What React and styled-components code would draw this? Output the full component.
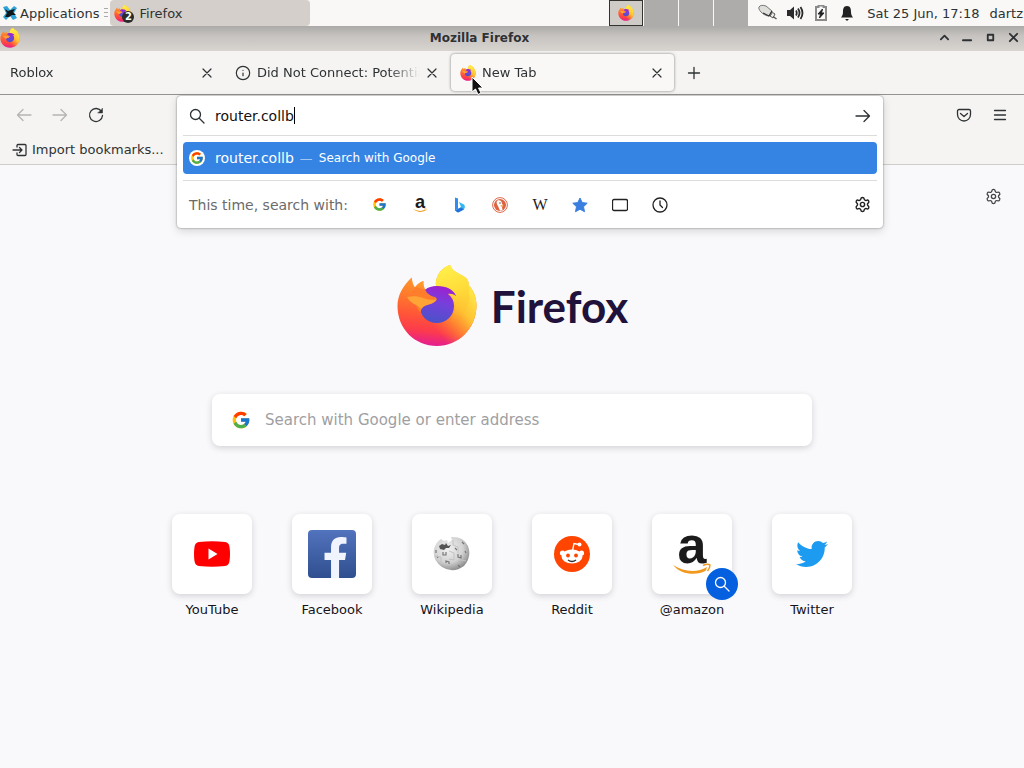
import React, { useId } from 'react'
import styled, { createGlobalStyle, css } from 'styled-components'
import { FcGoogle } from 'react-icons/fc'
import { FaFacebookF, FaTwitter } from 'react-icons/fa'
import { Info, Settings } from 'lucide-react'

const FirefoxLogo = ({ size }) => {
    const id = useId()
    const outline =
        'M14.700 12.500C15 16 16 20 18 22.500C20 19.500 23 17 26.500 16C26 19 27 22 28 24.500L39 21C38 13 43 3 53 0C54.500 4 57 6 60.500 8C64 10 67.500 11.500 70 14C71.500 16 71.500 18 71.500 20C76.500 25 79.500 32 79.500 41C79 64 61 81 40 81C18 81 0.500 64 0.500 41C0.500 31 5 22 14.700 12.500Z'
    return (
        <svg width={size} height={size} viewBox="0 0 80 82" aria-hidden="true">
            <defs>
                <linearGradient id={`${id}body`} x1="0.5" y1="0.1" x2="0.4" y2="1">
                    <stop offset="0" stopColor="#ffa52e" />
                    <stop offset="0.3" stopColor="#ff7f2b" />
                    <stop offset="0.6" stopColor="#ff5538" />
                    <stop offset="0.8" stopColor="#fc3b4c" />
                    <stop offset="1" stopColor="#e31c94" />
                </linearGradient>
                <linearGradient id={`${id}glow`} x1="0.98" y1="0.25" x2="0.42" y2="0.72">
                    <stop offset="0" stopColor="#fff04a" />
                    <stop offset="0.45" stopColor="#ffc233" />
                    <stop offset="0.7" stopColor="#ff9a2b" stopOpacity="0.7" />
                    <stop offset="1" stopColor="#ff7a2b" stopOpacity="0" />
                </linearGradient>
                <linearGradient id={`${id}flame`} x1="0.35" y1="0" x2="0.55" y2="1">
                    <stop offset="0" stopColor="#fff04a" />
                    <stop offset="0.5" stopColor="#ffdb38" />
                    <stop offset="1" stopColor="#ffb42b" stopOpacity="0" />
                </linearGradient>
                <linearGradient id={`${id}globe`} x1="0.65" y1="0" x2="0.4" y2="1">
                    <stop offset="0" stopColor="#a01fd0" />
                    <stop offset="0.45" stopColor="#7540dc" />
                    <stop offset="1" stopColor="#4a52c8" />
                </linearGradient>
            </defs>
            <path d={outline} fill={`url(#${id}body)`} />
            <path d={outline} fill={`url(#${id}glow)`} />
            <path
                d="M53 0C43 3 38 13 39 21C49 22 57 30 58 40C58 48 56 53 52 57C63 58 75 46 71.500 20C71.500 18 71.500 16 70 14C67.500 11.500 64 10 60.500 8C57 6 54.500 4 53 0Z"
                fill={`url(#${id}flame)`}
            />
            <path
                d="M28 25C31 22 35 21 40 21C50 21 57 25 59 31C56.500 29 53.500 28.500 51 29C55 32 57 36 57 41C57 51 49 58 40 58C30 58 23 51 23 41C23 35 25 29 28 25Z"
                fill={`url(#${id}globe)`}
            />
            <path
                d="M18 22L28 24.500C29 27 32 31 38 32C40 33 40 34.500 39 36C36 38.500 33 39 30 40C26 41.500 24 43.500 23.500 48C20 44 18 38 14 33Z"
                fill="#ff7d2b"
            />
            <path
                d="M10 32C15 31 21 31 26 33C31 35 36 35 39.500 34.500C37 38.500 33 39 30 40C27 41 25 42 24 44C21 39 14 40 10 32Z"
                fill="#ffa436"
            />
        </svg>
    )
}

const XfceIcon = () => (
    <svg width="16" height="16" viewBox="0 0 16 16" aria-hidden="true">
        <path d="M1 2L5 1L8 5L12 1L15 3L12 8L15 13L11 15L8 11L4 15L1 12L4 8Z" fill="#2fa3d6" />
        <path d="M3 4L6 6L9 5L13 4L11 7L14 10L10 10L7 12L3 12L5 8Z" fill="#10181c" />
    </svg>
)

const MouseIcon = () => (
    <svg width="20" height="18" viewBox="0 0 20 18" aria-hidden="true">
        <path d="M1 3C2 1 5 1 8 2L14 7L11 12C8 12 5 10 3 8C1 6 0.500 4 1 3Z" fill="#dededb" stroke="#777" />
        <path d="M5 9L11 12L14 7" fill="none" stroke="#333" strokeWidth="1.300" />
        <path d="M12 12L14.500 8.500L17 10L15 14Z" fill="#eee" stroke="#555" />
        <path d="M15 12.500L18.500 15" stroke="#555" strokeWidth="1.500" />
    </svg>
)

const VolumeIcon = () => (
    <svg width="18" height="16" viewBox="0 0 18 16" aria-hidden="true">
        <path d="M1 5H4L8 1.500V14.500L4 11H1Z" fill="#2b2b2b" />
        <path
            d="M10 5.500Q11.500 8 10 10.500M12 3.500Q15 8 12 12.500M14.500 2Q18.500 8 14.500 14"
            fill="none"
            stroke="#2b2b2b"
            strokeWidth="1.800"
        />
    </svg>
)

const BatteryIcon = () => (
    <svg width="18" height="16" viewBox="0 0 18 16" aria-hidden="true">
        <path d="M6.500 2V0.500H11.500V2H14V15H4V2Z" fill="none" stroke="#8a8a8a" strokeWidth="2" />
        <path d="M10.500 4L6 9H8.500L7.500 13L12 8H9.500Z" fill="#222" stroke="#222" />
    </svg>
)

const BellIcon = () => (
    <svg width="18" height="16" viewBox="0 0 18 16" aria-hidden="true">
        <path d="M9 1C5.500 1 5 4 5 7C5 10 4 11 3 12.500H15C14 11 13 10 13 7C13 4 12.500 1 9 1Z" fill="#222" />
        <path d="M7 14H11L9 16Z" fill="#222" />
    </svg>
)

const glyphs = {
    up: <path d="M2 8L6 4L10 8" strokeWidth="2" />,
    minimize: <path d="M1 9H10" strokeWidth="2" />,
    maximize: <path d="M3 3H9V9H3Z" strokeWidth="2" />,
    quit: <path d="M2 2L10 10M10 2L2 10" strokeWidth="2" />,
    close: <path d="M2 2L10 10M10 2L2 10" strokeWidth="1.200" />,
    plus: <path d="M8 2.500V13.500M2.500 8H13.500" />,
    back: <path d="M15 8H1.500M7 2.500L1.500 8L7 13.500" />,
    forward: <path d="M1 8H14.500M9 2.500L14.500 8L9 13.500" />,
    reload: (
        <>
            <path d="M13.500 4.500A6.500 6.500 0 1 0 14.500 8.500" />
            <path d="M14.500 1.500V6H10Z" fill="currentColor" strokeWidth="0.500" />
        </>
    ),
    search: (
        <>
            <circle cx="6.500" cy="6.500" r="5" />
            <path d="M10.500 10.500L15 15" />
        </>
    ),
    pocket: (
        <>
            <path d="M3 2.500H13A1.500 1.500 0 0 1 14.500 4V7.500A6.500 6.500 0 0 1 1.500 7.500V4A1.500 1.500 0 0 1 3 2.500Z" />
            <path d="M4.500 6.500L8 9.500L11.500 6.500" />
        </>
    ),
    menu: <path d="M2.500 3.500H13.500M2.500 8H13.500M2.500 12.500H13.500" />,
    import: <path d="M5 5V3.500A1 1 0 0 1 6 2.500H13A1 1 0 0 1 14 3.500V12.500A1 1 0 0 1 13 13.500H6A1 1 0 0 1 5 12.500V11M1 8H10M7.500 5.500L10 8L7.500 10.500" />,
    window: <rect x="0.500" y="2.500" width="15" height="11" rx="1.500" />,
    clock: (
        <>
            <circle cx="8" cy="8" r="7" />
            <path d="M8 4V8L10.500 10.500" />
        </>
    ),
}

const Glyph = ({ name, size = 16, box = 16, color = 'currentColor' }) => (
    <svg
        width={size}
        height={size}
        viewBox={`0 0 ${box} ${box}`}
        fill="none"
        stroke={color}
        strokeWidth="1.300"
        strokeLinecap="round"
        strokeLinejoin="round"
        aria-hidden="true"
    >
        {glyphs[name]}
    </svg>
)

const AmazonIcon = ({ size }) => (
    <svg width={size} height={size} viewBox="0 0 40 40" overflow="visible" aria-hidden="true">
        <text
            x="20"
            y="29"
            textAnchor="middle"
            fontFamily="Liberation Sans, sans-serif"
            fontWeight="700"
            fontSize="52"
            fill="#1b1b1b"
        >
            a
        </text>
        <path d="M1 31C12 38 25 39 35 33L34 36.500C25 42 9 41 1 31Z" fill="#f29a1f" />
        <path d="M31 31.500Q36 29.500 38 31Q38 34 35.500 37" fill="none" stroke="#f29a1f" strokeWidth="1.500" />
    </svg>
)

const BingIcon = () => (
    <svg width="16" height="16" viewBox="0 0 16 16" aria-hidden="true">
        <path d="M3 0.500L6 1.500V12L3 13.500Z" fill="#2f8df0" />
        <path d="M7 5L12 7.500C13.500 9 13 12 11 13L6 15.500L3 13.500L9 10Z" fill="#35b8f2" />
        <path d="M3 13.500L9 10.500L12 12.500L6 15.500Z" fill="#2470d8" />
    </svg>
)

const DuckIcon = () => (
    <svg width="16" height="16" viewBox="0 0 16 16" aria-hidden="true">
        <circle cx="8" cy="8" r="7.400" fill="#fff" stroke="#e0674a" />
        <circle cx="8" cy="8" r="6" fill="#e0613f" />
        <path d="M5.500 3.500C8 2.500 10 4 10 7L11 8L10 10L10.500 13L8 13.800L6 9C4.500 7 4 4.500 5.500 3.500Z" fill="#fff" />
        <circle cx="8" cy="6" r="0.700" fill="#333" />
        <path d="M8.500 8L12 8.500L9 10Z" fill="#fbb03b" />
    </svg>
)

const StarIcon = () => (
    <svg width="16" height="16" viewBox="0 0 16 16" aria-hidden="true">
        <path
            d="M8 1L10.200 5.600L15.200 6.200L11.500 9.700L12.500 14.700L8 12.200L3.500 14.700L4.500 9.700L0.800 6.200L5.800 5.600Z"
            fill="#3a7fe0"
            stroke="#3a7fe0"
            strokeLinejoin="round"
        />
    </svg>
)

const YouTubeIcon = () => (
    <svg width="36" height="26" viewBox="0 0 36 26" aria-hidden="true">
        <path d="M5 1Q18 -0.500 31 1Q35 1.500 35.500 6Q36.500 13 35.500 20Q35 24.500 31 25Q18 26.500 5 25Q1 24.500 0.500 20Q-0.500 13 0.500 6Q1 1.500 5 1Z" fill="#f00" />
        <path d="M14.500 7.500V18.500L23.500 13Z" fill="#fff" />
    </svg>
)

const WikipediaIcon = () => (
    <svg width="38" height="36" viewBox="0 0 38 36" aria-hidden="true">
        <defs>
            <radialGradient id="wikiGlobe" cx="0.4" cy="0.35" r="0.7">
                <stop offset="0" stopColor="#f1f1f1" />
                <stop offset="0.6" stopColor="#d2d2d2" />
                <stop offset="1" stopColor="#858585" />
            </radialGradient>
        </defs>
        <path d="M8 3L11 5L14 4L15 7L19 4L18 1Q30 0 35 10Q39 21 31 30Q20 38 9 31Q-1 24 1 13Q3 6 8 3Z" fill="url(#wikiGlobe)" />
        <path d="M6 10L9 8L12 9L13 7L15 10L18 9L16 12L13 12L11 14L7 13Z" fill="#555" />
        <path
            d="M10 16V19H13V16M22 12L24 14M29 6L31 8M25 18V21L28 22V19M13 27V25L16 26V28M25 29L27 31M32 15L33 17M3 14V17M4 20L5 22"
            fill="none"
            stroke="#777"
            strokeWidth="1.200"
        />
        <path d="M20 4V9L25 11V17M2 20L8 21V28M16 15L21 17V24L16 23M28 24L33 25" fill="none" stroke="#c2c2c2" />
    </svg>
)

const RedditIcon = () => (
    <svg width="36" height="36" viewBox="0 0 36 36" aria-hidden="true">
        <circle cx="18" cy="18" r="18" fill="#ff4500" />
        <path d="M18.500 15L20 7.500L25 8.500" fill="none" stroke="#fff" strokeWidth="1.300" />
        <circle cx="25.500" cy="8.500" r="2" fill="#fff" />
        <circle cx="8.500" cy="17" r="2.600" fill="#fff" />
        <circle cx="27.500" cy="17" r="2.600" fill="#fff" />
        <ellipse cx="18" cy="20.500" rx="10.500" ry="7" fill="#fff" />
        <circle cx="14" cy="19.500" r="1.900" fill="#ff4500" />
        <circle cx="22" cy="19.500" r="1.900" fill="#ff4500" />
        <path d="M14 24Q18 27 22 24" fill="none" stroke="#333" strokeWidth="1.300" />
    </svg>
)

const PointerIcon = () => (
    <svg width="14" height="20" viewBox="0 0 14 20" aria-hidden="true">
        <path d="M1 1V16L4.500 13L7 18.500L10 17L7.500 12H12Z" fill="#111" stroke="#fff" />
    </svg>
)

const tabs = [
    { title: 'Roblox' },
    { title: 'Did Not Connect: Potential', icon: <Info size={16} strokeWidth={1.8} /> },
    { title: 'New Tab', icon: <FirefoxLogo size={16} />, active: true },
]

const engines = [
    { name: 'Google', icon: <FcGoogle size={15} /> },
    { name: 'Amazon', icon: <AmazonIcon size={14} /> },
    { name: 'Bing', icon: <BingIcon /> },
    { name: 'DuckDuckGo', icon: <DuckIcon /> },
    { name: 'Wikipedia', letter: 'W' },
    { name: 'Bookmarks', icon: <StarIcon /> },
    { name: 'Tabs', icon: <Glyph name="window" /> },
    { name: 'History', icon: <Glyph name="clock" /> },
]

const sites = [
    { name: 'YouTube', icon: <YouTubeIcon /> },
    { name: 'Facebook', facebook: true },
    { name: 'Wikipedia', icon: <WikipediaIcon /> },
    { name: 'Reddit', icon: <RedditIcon /> },
    { name: '@amazon', icon: <AmazonIcon size={40} />, search: true },
    { name: 'Twitter', icon: <FaTwitter size={32} color="#1d9bf0" /> },
]

function App() {
    return (
        <Desktop>
            <GlobalStyle />
            <Panel>
                <AppsButton>
                    <XfceIcon />
                    Applications
                </AppsButton>
                <Handle />
                <TaskButton>
                    <TaskIcon>
                        <FirefoxLogo size={17} />
                        <Count>2</Count>
                    </TaskIcon>
                    Firefox
                </TaskButton>
                <Pager>
                    <Workspace $active>
                        <FirefoxLogo size={16} />
                    </Workspace>
                    <Workspace />
                    <Workspace />
                    <Workspace />
                </Pager>
                <Tray>
                    <MouseIcon />
                    <VolumeIcon />
                    <BatteryIcon />
                    <BellIcon />
                </Tray>
                <Clock>Sat 25 Jun, 17:18</Clock>
                <span>dartz</span>
            </Panel>

            <TitleBar>
                <FirefoxLogo size={20} />
                <WindowTitle>Mozilla Firefox</WindowTitle>
                <WindowControls>
                    <IconButton aria-label="Roll up"><Glyph name="up" size={11} box={12} /></IconButton>
                    <IconButton aria-label="Minimize"><Glyph name="minimize" size={11} box={12} /></IconButton>
                    <IconButton aria-label="Maximize"><Glyph name="maximize" size={11} box={12} /></IconButton>
                    <IconButton aria-label="Close window"><Glyph name="quit" size={11} box={12} /></IconButton>
                </WindowControls>
            </TitleBar>

            <TabStrip>
                {tabs.map((tab) => (
                    <Tab key={tab.title} $active={tab.active}>
                        {tab.icon}
                        <TabLabel>{tab.title}</TabLabel>
                        <IconButton aria-label={`Close ${tab.title}`}>
                            <Glyph name="close" size={12} box={12} />
                        </IconButton>
                        {tab.active && <Pointer><PointerIcon /></Pointer>}
                    </Tab>
                ))}
                <NewTabButton aria-label="Open a new tab"><Glyph name="plus" /></NewTabButton>
            </TabStrip>

            <Toolbar>
                <NavButtons>
                    <IconButton aria-label="Back" $muted><Glyph name="back" /></IconButton>
                    <IconButton aria-label="Forward" $muted><Glyph name="forward" /></IconButton>
                    <IconButton aria-label="Reload"><Glyph name="reload" /></IconButton>
                </NavButtons>
                <UrlSlot>
                    <UrlPopup>
                        <UrlRow>
                            <Glyph name="search" />
                            <UrlEntry>
                                <UrlInput aria-label="Address" defaultValue="router.collb" />
                                <Caret />
                            </UrlEntry>
                            <IconButton aria-label="Go"><Glyph name="forward" /></IconButton>
                        </UrlRow>
                        <Result>
                            <ResultIcon><FcGoogle size={14} /></ResultIcon>
                            <span>router.collb</span>
                            <Dash>—</Dash>
                            <ResultAction>Search with Google</ResultAction>
                        </Result>
                        <OneOffs>
                            <OneOffLabel>This time, search with:</OneOffLabel>
                            <Engines>
                                {engines.map((engine) => (
                                    <IconButton key={engine.name} aria-label={engine.name}>
                                        {engine.letter ? <Letter>{engine.letter}</Letter> : engine.icon}
                                    </IconButton>
                                ))}
                            </Engines>
                            <IconButton aria-label="Search settings"><Settings size={17} strokeWidth={2} /></IconButton>
                        </OneOffs>
                    </UrlPopup>
                </UrlSlot>
                <ToolButtons>
                    <IconButton aria-label="Save to Pocket"><Glyph name="pocket" /></IconButton>
                    <IconButton aria-label="Menu"><Glyph name="menu" /></IconButton>
                </ToolButtons>
            </Toolbar>

            <Bookmarks>
                <BookmarkButton>
                    <Glyph name="import" />
                    Import bookmarks...
                </BookmarkButton>
            </Bookmarks>

            <Page>
                <PageTools>
                    <IconButton aria-label="Customize new tab"><Settings size={17} strokeWidth={1.8} /></IconButton>
                </PageTools>
                <Brand>
                    <FirefoxLogo size={82} />
                    <Wordmark>Firefox</Wordmark>
                </Brand>
                <SearchBox>
                    <FcGoogle size={20} />
                    <SearchInput aria-label="Search" placeholder="Search with Google or enter address" />
                </SearchBox>
                <Sites>
                    {sites.map((site) => (
                        <Site key={site.name} href="#">
                            <Tile>
                                {site.facebook ? (
                                    <FacebookBox><FaFacebookF size={41} /></FacebookBox>
                                ) : (
                                    site.icon
                                )}
                                {site.search && (
                                    <SearchBadge><Glyph name="search" color="#fff" /></SearchBadge>
                                )}
                            </Tile>
                            {site.name}
                        </Site>
                    ))}
                </Sites>
            </Page>
        </Desktop>
    )
}

const GlobalStyle = createGlobalStyle`
    * {
        box-sizing: border-box;
    }
    body {
        margin: 0;
        font-family: 'DejaVu Sans', sans-serif;
        font-size: 13px;
        color: #2e3234;
    }
    button, input {
        font: inherit;
        color: inherit;
        border: 0;
        padding: 0;
        background: none;
        outline: none;
    }
    svg {
        display: block;
        flex-shrink: 0;
    }
`
const Desktop = styled.div`
    display: flex;
    flex-direction: column;
    min-height: 100vh;
`
const IconButton = styled.button`
    display: flex;
    align-items: center;
    justify-content: center;
    color: ${({ $muted }) => ($muted ? '#b5b4b2' : 'inherit')};
`
const Panel = styled.header`
    display: flex;
    align-items: center;
    height: 26px;
    padding-right: 1px;
    background: #f9f8f7;
    white-space: nowrap;
`
const AppsButton = styled.button`
    display: flex;
    align-items: center;
    gap: 2px;
    padding-left: 2px;
`
const Handle = styled.span`
    width: 4px;
    height: 10px;
    margin: 0 2px 0 5px;
    background: repeating-linear-gradient(#aaa 0 1px, transparent 1px 4px);
`
const TaskButton = styled.button`
    display: flex;
    align-items: center;
    gap: 8px;
    width: 200px;
    height: 26px;
    padding-left: 4px;
    border-radius: 4px;
    background: #d4cfca;
`
const TaskIcon = styled.span`
    position: relative;
    width: 17px;
`
const Count = styled.span`
    position: absolute;
    left: 8px;
    top: 6px;
    width: 12px;
    height: 12px;
    border-radius: 50%;
    background: #2b2b2b;
    color: #fff;
    font-size: 10px;
    font-weight: bold;
    line-height: 12px;
    text-align: center;
`
const Pager = styled.div`
    display: flex;
    gap: 1px;
    height: 26px;
    margin-left: auto;
`
const Workspace = styled.span`
    display: flex;
    align-items: center;
    justify-content: center;
    width: 34px;
    background: #adacaa;
    ${({ $active }) =>
        $active &&
        css`
            border: 1px solid #33332f;
            background: #cfccc8;
        `}
`
const Tray = styled.div`
    display: flex;
    align-items: center;
    gap: 8px;
    margin: 0 11px 0 10px;
`
const Clock = styled.time`
    margin-right: 10px;
`
const TitleBar = styled.div`
    display: flex;
    align-items: center;
    height: 25px;
    padding: 0 5px 2px 0;
    background: linear-gradient(#acaaa8, #c6c3c0 40%, #d8d4d0);
`
const WindowTitle = styled.h1`
    flex: 1;
    margin: 0;
    font-size: 12px;
    text-align: center;
`
const WindowControls = styled.div`
    display: flex;
    gap: 12px;
`
const TabStrip = styled.nav`
    display: flex;
    align-items: center;
    height: 44px;
    background: #f5f4f2;
    border-bottom: 1px solid #949391;
`
const Tab = styled.div`
    position: relative;
    display: flex;
    align-items: center;
    gap: 6px;
    width: 223px;
    height: 37px;
    margin: 0 1px;
    padding: 0 11px 0 9px;
    border-radius: 4px;
    ${({ $active }) =>
        $active &&
        css`
            background: #f9f8f7;
            box-shadow: 0 0 3px rgba(0, 0, 0, 0.5);
        `}
`
const TabLabel = styled.span`
    flex: 1;
    overflow: hidden;
    white-space: nowrap;
    line-height: 20px;
    mask-image: linear-gradient(to left, transparent, #000 32px);
`
const Pointer = styled.span`
    position: absolute;
    left: 20px;
    top: 22px;
    z-index: 3;
`
const NewTabButton = styled(IconButton)`
    width: 38px;
    height: 32px;
`
const Toolbar = styled.div`
    display: flex;
    align-items: center;
    height: 40px;
    padding: 0 16px;
    background: #f5f4f2;
`
const NavButtons = styled.div`
    display: flex;
    gap: 20px;
`
const UrlSlot = styled.div`
    position: relative;
    flex: 1;
    align-self: stretch;
    margin: 0 73px;
`
const UrlPopup = styled.div`
    position: absolute;
    top: 1px;
    left: 0;
    right: 0;
    z-index: 2;
    padding: 0 6px;
    background: #fff;
    border-radius: 4px;
    box-shadow: 0 0 2px rgba(0, 0, 0, 0.5), 0 3px 10px rgba(0, 0, 0, 0.15);
    font-size: 14px;
`
const UrlRow = styled.div`
    display: flex;
    align-items: center;
    gap: 10px;
    height: 40px;
    padding: 0 6px;
    border-bottom: 1px solid #dcdcdc;
`
const UrlEntry = styled.div`
    flex: 1;
    display: flex;
    align-items: center;
    color: #111;
`
const UrlInput = styled.input`
    field-sizing: content;
`
const Caret = styled.span`
    width: 1px;
    height: 17px;
    background: #000;
`
const Result = styled.div`
    display: flex;
    align-items: center;
    height: 32px;
    margin: 6px 0;
    padding-left: 6px;
    border-radius: 4px;
    background: #3584e4;
    color: #fff;
`
const ResultIcon = styled.span`
    display: flex;
    align-items: center;
    justify-content: center;
    width: 16px;
    height: 16px;
    margin-right: 10px;
    border-radius: 50%;
    background: #fff;
`
const Dash = styled.span`
    margin: 0 6px;
    font-size: 13px;
    opacity: 0.6;
`
const ResultAction = styled.span`
    font-size: 12px;
`
const OneOffs = styled.div`
    display: flex;
    align-items: center;
    height: 48px;
    padding: 0 6px;
    border-top: 1px solid #dcdcdc;
    color: #222;
`
const OneOffLabel = styled.span`
    color: #6b6b6b;
`
const Engines = styled.div`
    flex: 1;
    display: flex;
    gap: 24px;
    margin-left: 24px;

    button {
        width: 16px;
        height: 16px;
    }
`
const Letter = styled.span`
    font-family: 'Liberation Serif', serif;
    font-size: 16px;
    line-height: 16px;
`
const ToolButtons = styled.div`
    display: flex;
    gap: 20px;
`
const Bookmarks = styled.div`
    display: flex;
    align-items: center;
    height: 30px;
    padding-left: 12px;
    background: #f5f4f2;
    border-bottom: 1px solid #cfcecd;
`
const BookmarkButton = styled.button`
    display: flex;
    align-items: center;
    gap: 4px;
`
const Page = styled.main`
    flex: 1;
    display: flex;
    flex-direction: column;
    align-items: center;
    background: #f9f9fb;
    color: #15141a;
`
const PageTools = styled.div`
    display: flex;
    align-self: flex-end;
    padding: 23px 22px 0 0;
    color: #444;
`
const Brand = styled.div`
    display: flex;
    align-items: center;
    gap: 13px;
    margin: 60px 0 47px;
`
const Wordmark = styled.h2`
    margin: 0;
    font-family: Lato, sans-serif;
    font-size: 44px;
    font-weight: 700;
    line-height: 80px;
    color: #20123a;
`
const SearchBox = styled.div`
    display: flex;
    align-items: center;
    gap: 14px;
    width: 600px;
    max-width: 90%;
    height: 52px;
    padding: 0 19px;
    border-radius: 8px;
    background: #fff;
    box-shadow: 0 2px 6px rgba(58, 57, 68, 0.2);
`
const SearchInput = styled.input`
    flex: 1;
    font-size: 15px;

    &::placeholder {
        color: #a0a0a3;
        opacity: 1;
    }
`
const Sites = styled.div`
    display: flex;
    margin-top: 68px;
`
const Site = styled.a`
    display: flex;
    flex-direction: column;
    align-items: center;
    gap: 8px;
    width: 120px;
    color: inherit;
    line-height: 16px;
    text-decoration: none;
`
const Tile = styled.span`
    position: relative;
    display: flex;
    align-items: center;
    justify-content: center;
    width: 80px;
    height: 80px;
    border-radius: 8px;
    background: #fff;
    box-shadow: 0 2px 6px rgba(58, 57, 68, 0.2);
`
const FacebookBox = styled.span`
    display: flex;
    align-items: flex-end;
    justify-content: flex-end;
    width: 48px;
    height: 48px;
    overflow: hidden;
    border-radius: 4px;
    background: linear-gradient(#5273bd, #2f4f8f);
    color: #f0f4ff;
`
const SearchBadge = styled.span`
    position: absolute;
    right: -6px;
    bottom: -6px;
    display: flex;
    align-items: center;
    justify-content: center;
    width: 32px;
    height: 32px;
    border-radius: 50%;
    background: #0560df;
`

export default App
